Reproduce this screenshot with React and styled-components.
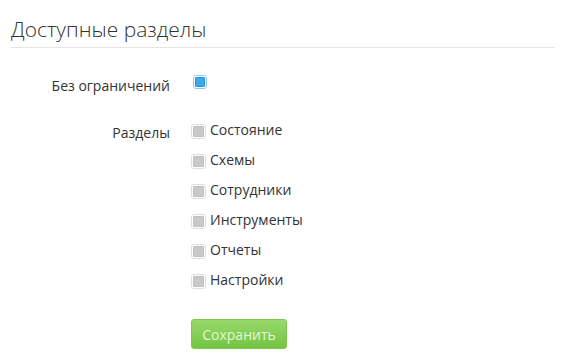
import React, { useState } from "react";
import styled, { createGlobalStyle } from "styled-components";

const GlobalStyle = createGlobalStyle`
    body {
        margin: 0;
        background: #ffffff;
        font-family: "Open Sans", "Liberation Sans", sans-serif;
        color: #333;
    }
`;

const Page = styled.div`
    padding: 13px 15px 0 11px;
`;

const Title = styled.h2`
    margin: 0;
    font-size: 21px;
    font-weight: 300;
    color: #333;
    line-height: 32px;
    padding-bottom: 2px;
    border-bottom: 1px solid #e5e5e5;
`;

const Form = styled.form`
    display: grid;
    grid-template-columns: 159px 1fr;
    column-gap: 21px;
    row-gap: 24px;
    margin-top: 28px;
`;

const Label = styled.div`
    text-align: right;
    font-size: 14px;
    color: #333;
    line-height: 20px;
    padding-top: ${(p) => p.$top || 0}px;
`;

const List = styled.div`
    display: flex;
    flex-direction: column;
    gap: 10px;
`;

const Option = styled.label`
    display: flex;
    align-items: center;
    gap: 4px;
    font-size: 14px;
    line-height: 20px;
    color: #333;
    cursor: pointer;
`;

const Box = styled.span`
    box-sizing: border-box;
    width: ${(p) => (p.$checked ? 14 : 15)}px;
    height: ${(p) => (p.$checked ? 14 : 15)}px;
    border-radius: 3px;
    border: 1px solid ${(p) => (p.$checked ? "#8fcbf0" : "#dedede")};
    padding: 1px;
    display: flex;
    flex-shrink: 0;
    margin-top: ${(p) => p.$offset || 0}px;

    &::after {
        content: "";
        flex: 1;
        border-radius: 1px;
        background: ${(p) => (p.$checked ? "#3ba9e9" : "#c9c9c9")};
        border: 1px solid ${(p) => (p.$checked ? "#2c94d6" : "#c0c0c0")};
    }
`;

const Toggle = styled.div`
    display: flex;
    align-items: center;
    height: 20px;
    margin-left: 2px;
    margin-top: -4px;
`;

const Button = styled.button`
    width: 96px;
    height: 30px;
    margin-top: 19px;
    border: 1px solid #7cc84e;
    border-radius: 3px;
    background: linear-gradient(#97d96a, #74c442);
    color: #e4f6d6;
    font-family: "Open Sans", "Liberation Sans", sans-serif;
    font-size: 14px;
    font-weight: 400;
    cursor: pointer;
    padding: 0;
`;

const sections = ["Состояние", "Схемы", "Сотрудники", "Инструменты", "Отчеты", "Настройки"];

export default function App() {
    const [all, setAll] = useState(true);

    return (
        <Page>
            <GlobalStyle />
            <Title>Доступные разделы</Title>
            <Form onSubmit={(e) => e.preventDefault()}>
                <Label>Без ограничений</Label>
                <Toggle onClick={() => setAll(!all)}>
                    <Box $checked={all} />
                </Toggle>

                <Label $top={3}>Разделы</Label>
                <List>
                    {sections.map((s) => (
                        <Option key={s}>
                            <Box $offset={3} />
                            {s}
                        </Option>
                    ))}
                    <div>
                        <Button type="submit">Сохранить</Button>
                    </div>
                </List>
            </Form>
        </Page>
    );
}
